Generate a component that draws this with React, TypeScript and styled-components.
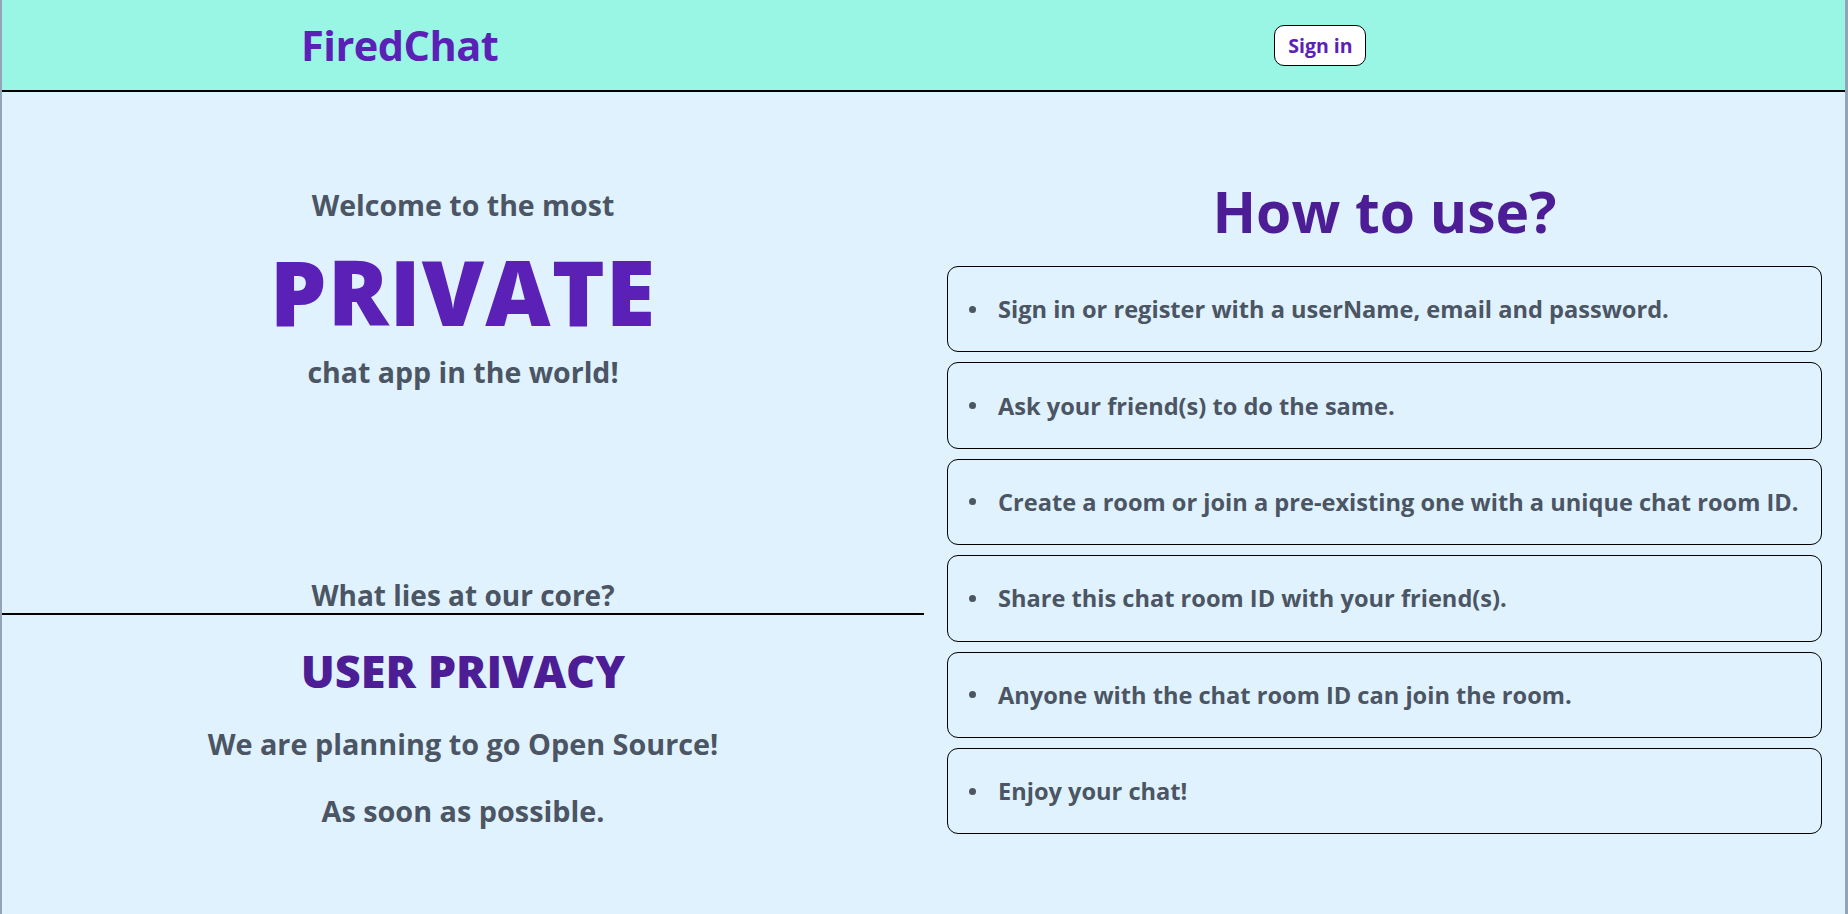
import React from "react";
import styled, { createGlobalStyle } from "styled-components";

const GlobalStyle = createGlobalStyle`
  html, body {
    margin: 0;
    padding: 0;
    background: #e0f2fe;
  }
  body {
    font-family: "Open Sans", "Noto Sans", sans-serif;
  }
  * { box-sizing: border-box; }
`;

const Page = styled.div`
  min-height: 100vh;
  background: #e0f2fe;
  border-left: 2px solid #94a3b8;
  border-right: 3px solid #94a3b8;
  display: flex;
  flex-direction: column;
`;

const Header = styled.header`
  height: 92px;
  background: #99f6e4;
  border-bottom: 2px solid #000;
  display: flex;
  align-items: center;
  padding-left: 299px;
  gap: 776px;
`;

const Logo = styled.h1`
  margin: 0;
  font-size: 41.5px;
  font-weight: 700;
  color: #5b21b6;
  letter-spacing: -0.5px;
`;

const SignInButton = styled.button`
  font-family: inherit;
  height: 41px;
  width: 92px;
  padding: 0;
  background: #fff;
  border: 1px solid #000;
  border-radius: 10px;
  color: #5b21b6;
  font-size: 19.5px;
  font-weight: 700;
  cursor: pointer;
`;

const Main = styled.main`
  display: grid;
  grid-template-columns: 922px 1fr;
  flex: 1;
`;

const LeftColumn = styled.section`
  display: flex;
  flex-direction: column;
  text-align: center;
  color: #4b5563;
`;

const Intro = styled.div`
  padding-top: 94px;
  display: flex;
  flex-direction: column;
  align-items: center;
`;

const Lead = styled.p`
  margin: 0;
  font-size: 28.5px;
  font-weight: 700;
  line-height: 38px;
`;

const Highlight = styled.h2`
  margin: 17px 0 12px;
  font-size: 90px;
  font-weight: 800;
  line-height: 100px;
  color: #5b21b6;
  letter-spacing: 1px;
`;

const Core = styled.div`
  margin-top: 186px;
  display: flex;
  flex-direction: column;
  align-items: center;
`;

const CoreQuestion = styled.p`
  margin: 0;
  width: 100%;
  font-size: 28px;
  font-weight: 700;
  line-height: 36px;
  border-bottom: 2px solid #000;
`;

const CoreValue = styled.h3`
  margin: 30px 0 0;
  font-size: 45px;
  font-weight: 800;
  line-height: 52px;
  color: #4c1d95;
`;

const Note = styled.p<{ $gap: number }>`
  margin: ${(p) => p.$gap}px 0 0;
  font-size: 28.8px;
  font-weight: 700;
  line-height: 38px;
`;

const RightColumn = styled.section`
  padding: 0 23px 0 23px;
  display: flex;
  flex-direction: column;
  align-items: stretch;
`;

const Title = styled.h2`
  margin: 80px 0 0;
  text-align: center;
  font-size: 57px;
  font-weight: 700;
  line-height: 78px;
  color: #4c1d95;
`;

const Steps = styled.ul`
  list-style: none;
  margin: 16px 0 0;
  padding: 0;
  display: flex;
  flex-direction: column;
  gap: 10px;
`;

const Step = styled.li`
  height: 86.4px;
  border: 1px solid #000;
  border-radius: 11px;
  display: flex;
  align-items: center;
  padding-left: 21px;
  gap: 22px;
  font-size: 23.6px;
  font-weight: 700;
  color: #4b5563;
`;

const Bullet = styled.span`
  width: 7px;
  height: 7px;
  border-radius: 50%;
  background: #4b5563;
  flex-shrink: 0;
`;

const steps = [
  "Sign in or register with a userName, email and password.",
  "Ask your friend(s) to do the same.",
  "Create a room or join a pre-existing one with a unique chat room ID.",
  "Share this chat room ID with your friend(s).",
  "Anyone with the chat room ID can join the room.",
  "Enjoy your chat!",
];

export default function App() {
  return (
    <>
      <GlobalStyle />
      <Page>
        <Header>
          <Logo>FiredChat</Logo>
          <SignInButton>Sign in</SignInButton>
        </Header>
        <Main>
          <LeftColumn>
            <Intro>
              <Lead>Welcome to the most</Lead>
              <Highlight>PRIVATE</Highlight>
              <Lead>chat app in the world!</Lead>
            </Intro>
            <Core>
              <CoreQuestion>What lies at our core?</CoreQuestion>
              <CoreValue>USER PRIVACY</CoreValue>
              <Note $gap={28}>We are planning to go Open Source!</Note>
              <Note $gap={29}>As soon as possible.</Note>
            </Core>
          </LeftColumn>
          <RightColumn>
            <Title>How to use?</Title>
            <Steps>
              {steps.map((s) => (
                <Step key={s}>
                  <Bullet />
                  {s}
                </Step>
              ))}
            </Steps>
          </RightColumn>
        </Main>
      </Page>
    </>
  );
}
